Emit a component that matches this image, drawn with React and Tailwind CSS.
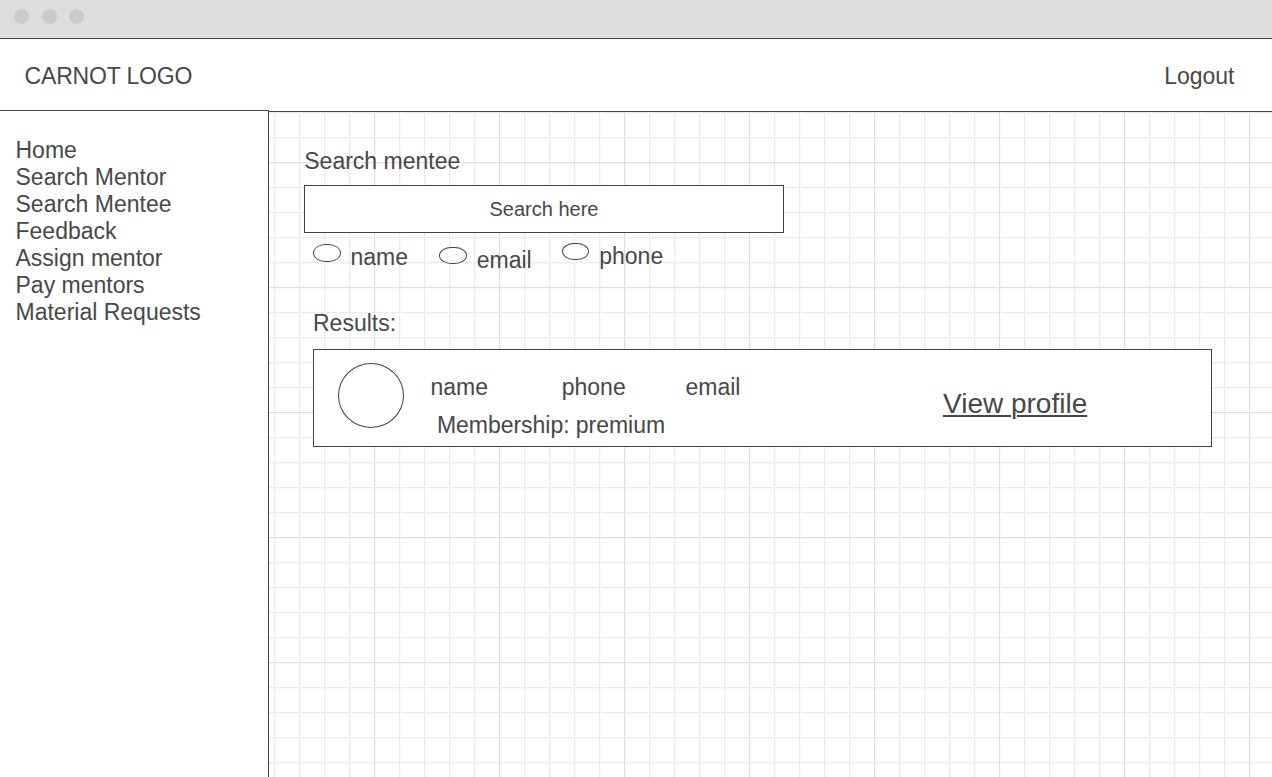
const navItems = [
  'Home',
  'Search Mentor',
  'Search Mentee',
  'Feedback',
  'Assign mentor',
  'Pay mentors',
  'Material Requests',
];

function TitleBar() {
  return (
    <div className="flex h-[39px] shrink-0 border-b border-[#434343] bg-[#dddddd] pt-[9px] pl-[14px]">
      <span className="size-[15px] rounded-full bg-[#cacaca]" />
      <span className="ml-[13px] size-[15px] rounded-full bg-[#cacaca]" />
      <span className="ml-[12px] size-[15px] rounded-full bg-[#cacaca]" />
    </div>
  );
}

function Radio({ className }) {
  return <span className={`rounded-[45%/50%] border border-[#434343] bg-white ${className}`} />;
}

function Filters() {
  return (
    <div className="mt-[9px] ml-[9px] flex h-[40px] items-start">
      <Radio className="mt-[2px] h-[18px] w-[28px]" />
      <span className="mt-[2px] ml-[9.5px] w-[88.5px]">name</span>
      <Radio className="mt-[5px] h-[17px] w-[28px]" />
      <span className="mt-[5px] ml-[9.75px] w-[85.25px]">email</span>
      <Radio className="mt-px h-[17px] w-[27px]" />
      <span className="mt-px ml-[10.25px]">phone</span>
    </div>
  );
}

function ResultCard() {
  return (
    <div className="mt-[12px] ml-[9px] flex h-[98px] w-[899px] border border-[#434343] bg-white">
      <span className="mt-[13px] ml-[24px] h-[65px] w-[66px] rounded-[50%] border border-[#434343]" />
      <div className="mt-[24px] ml-[26.5px] w-[512.5px]">
        <div className="flex">
          <span className="w-[131.25px]">name</span>
          <span className="w-[123.75px]">phone</span>
          <span>email</span>
        </div>
        <div className="mt-[11px] ml-[6.5px] tracking-[-0.04px]">Membership: premium</div>
      </div>
      <a className="mt-[38px] text-[28px] leading-[32px] underline decoration-2 underline-offset-2">
        View profile
      </a>
    </div>
  );
}

export default function App() {
  return (
    <div className="flex h-[777px] w-[1272px] flex-col overflow-hidden bg-white font-['Liberation_Sans',Arial,sans-serif] text-[23px] leading-[27px] whitespace-nowrap text-[#484848]">
      <TitleBar />
      <div className="flex h-[72px] shrink-0 justify-between pt-[24px] pr-[37.5px] pl-[24.5px]">
        <span className="tracking-[-0.16px]">CARNOT LOGO</span>
        <span>Logout</span>
      </div>
      <div className="flex min-h-0 flex-1">
        <nav className="-mt-px w-[269px] shrink-0 border-t border-r border-[#434343] pt-[26px] pl-[15.5px]">
          {navItems.map((item) => (
            <div key={item}>{item}</div>
          ))}
        </nav>
        <main className="flex-1 border-t border-[#434343] bg-[linear-gradient(to_right,#dedede_1px,transparent_1px),linear-gradient(to_bottom,#dedede_1px,transparent_1px),linear-gradient(to_right,#ebebeb_1px,#f8f8f8_1px,#f8f8f8_2px,transparent_2px),linear-gradient(to_bottom,#ebebeb_1px,#f8f8f8_1px,#f8f8f8_2px,transparent_2px)] bg-[length:125px_125px,125px_125px,25px_25px,25px_25px] bg-[position:105px_0,0_50px,5px_0,0_0] pt-[36px] pl-[35px]">
          <div className="ml-[0.25px]">Search mentee</div>
          <div className="mt-[10px] flex h-[48px] w-[480px] items-center justify-center border border-[#434343] bg-white text-[20px]">
            Search here
          </div>
          <Filters />
          <div className="mt-[28px] ml-[9px]">Results:</div>
          <ResultCard />
        </main>
      </div>
    </div>
  );
}
